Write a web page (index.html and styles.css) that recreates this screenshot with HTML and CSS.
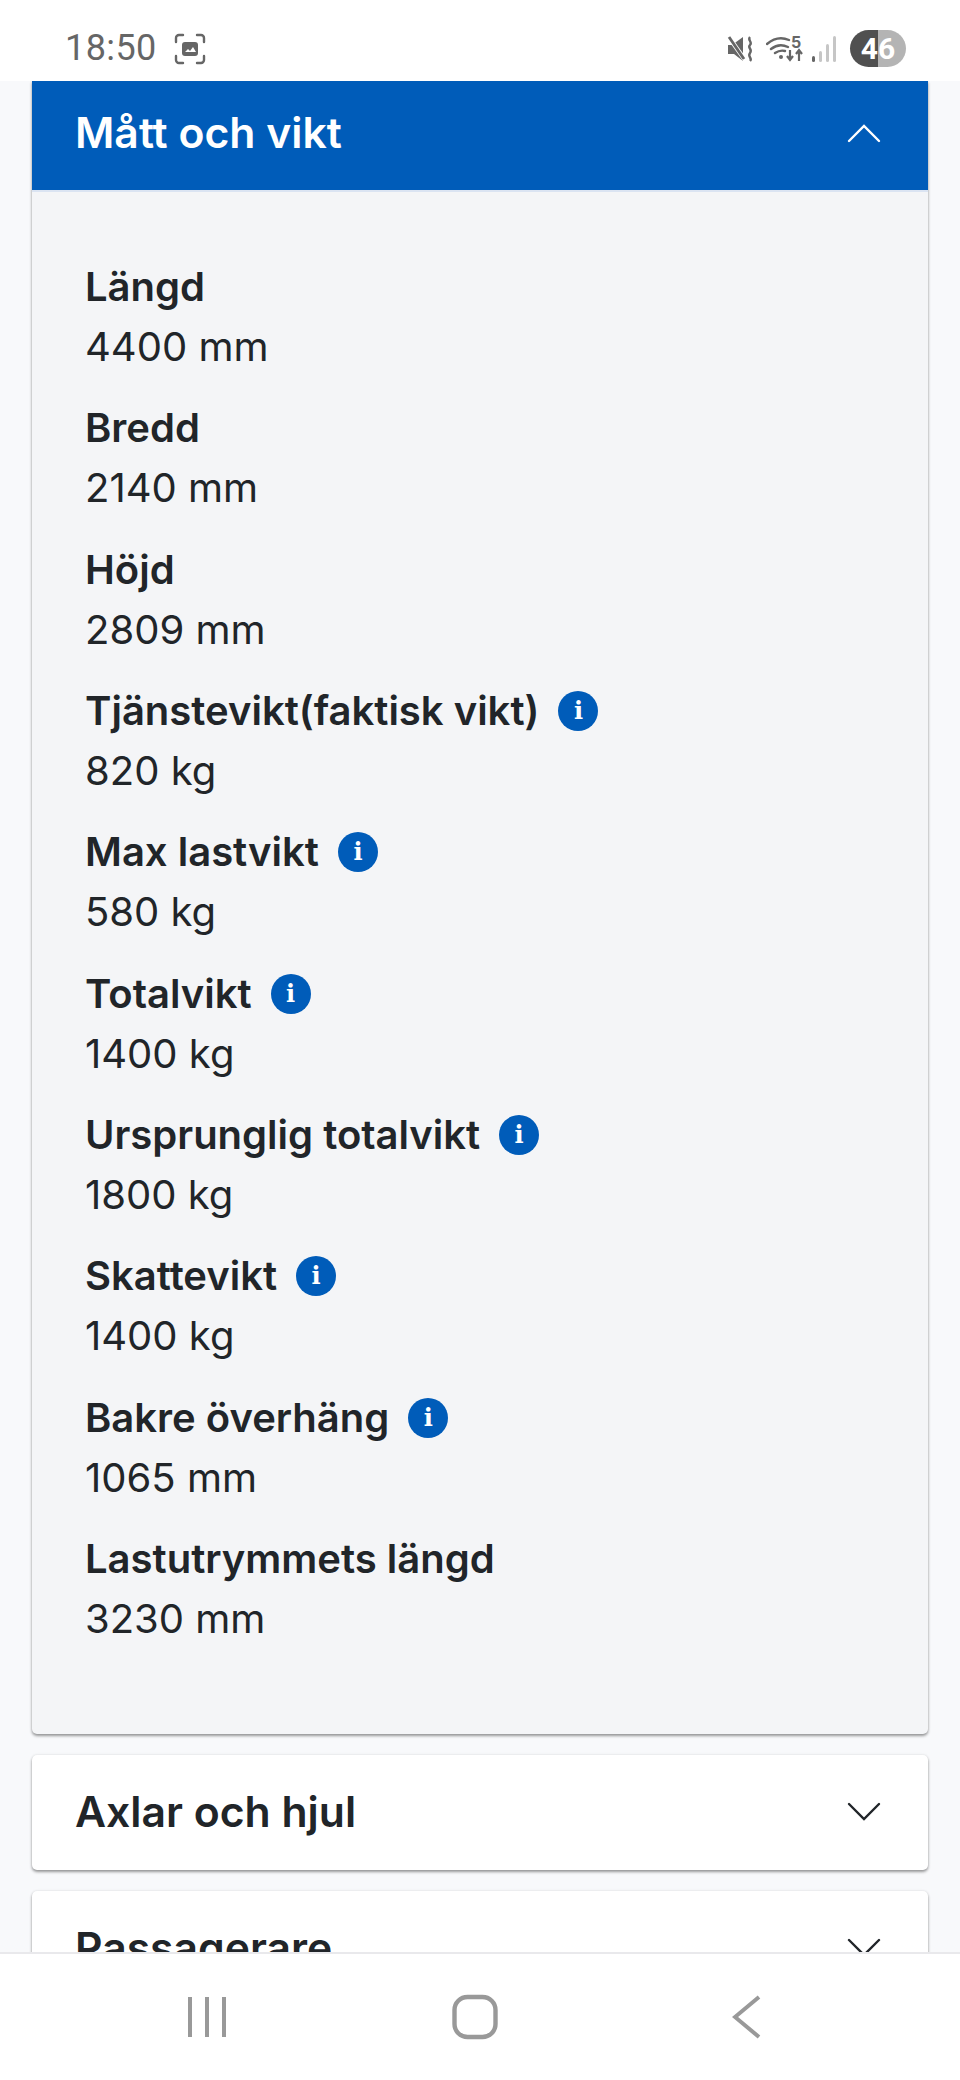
FILE: index.html
```html
<!DOCTYPE html>
<html lang="sv">
<head>
<meta charset="utf-8">
<title>Mått och vikt</title>
<link rel="stylesheet" href="styles.css">
</head>
<body>
<div class="phone">
  <header class="status">
    <div class="status-left">
      <span class="time">18:50</span>
      <svg class="shot" viewBox="0 0 32 32" fill="none"><path d="M2 9V5a3 3 0 0 1 3-3h4M23 2h4a3 3 0 0 1 3 3v4M30 23v4a3 3 0 0 1-3 3h-4M9 30H5a3 3 0 0 1-3-3v-4" stroke="#666" stroke-width="2.400" stroke-linecap="round"/><rect x="8" y="9" width="16" height="14" rx="3" fill="#666"/><path d="M11 19l3-3 2 2 3-4 3 5z" fill="#fff"/></svg>
    </div>
    <div class="status-right">
      <svg class="mute" viewBox="0 0 26 26"><path d="M1 9h4l11-8v24l-9-7H1z" fill="#666"/><path d="M1 0l17 24" stroke="#fff" stroke-width="4.500"/><path d="M2 1l15 22" stroke="#666" stroke-width="2.800"/><path d="M23 1c-3 3 3 5 0 8s3 4 0 8 3 5 0 8" stroke="#666" stroke-width="2.400" fill="none"/></svg>
      <svg class="wifi" viewBox="0 0 38 26" fill="none"><path d="M1 8c7-6 15-7 22-4M5 13c5-4 11-5 17-2M9 17c3-2 6-3 10-2" stroke="#666" stroke-width="2.400" stroke-linecap="round"/><circle cx="15" cy="21" r="2" fill="#666"/><path d="M24 14v10M21 20l3 4 3-4M33 25V15M30 18l3-4 3 4" stroke="#666" stroke-width="2.200"/></svg>
      <span class="wifi-5">5</span>
      <svg class="signal" viewBox="0 0 26 26"><rect x="1" y="20" width="3" height="6" rx="1.500" fill="#666"/><rect x="8" y="15" width="3" height="11" rx="1.500" fill="#c6c6c6"/><rect x="15" y="8" width="3" height="18" rx="1.500" fill="#c6c6c6"/><rect x="22" y="0" width="3" height="26" rx="1.500" fill="#c6c6c6"/></svg>
      <div class="battery"><span class="battery-num">46</span></div>
    </div>
  </header>

  <main class="content">
    <section class="card open">
      <div class="card-head head-blue">
        <h2>Mått och vikt</h2>
        <svg class="chev" viewBox="0 0 34 20" fill="none"><path d="M2 18L17 3l15 15" stroke="#fff" stroke-width="2.400" stroke-linecap="round"/></svg>
      </div>
      <div class="card-body">
        <div class="row"><div class="label">Längd</div><div class="value">4400 mm</div></div>
        <div class="row"><div class="label">Bredd</div><div class="value">2140 mm</div></div>
        <div class="row"><div class="label">Höjd</div><div class="value">2809 mm</div></div>
        <div class="row"><div class="label">Tjänstevikt(faktisk vikt)<span class="info">i</span></div><div class="value">820 kg</div></div>
        <div class="row"><div class="label">Max lastvikt<span class="info">i</span></div><div class="value">580 kg</div></div>
        <div class="row"><div class="label">Totalvikt<span class="info">i</span></div><div class="value">1400 kg</div></div>
        <div class="row"><div class="label">Ursprunglig totalvikt<span class="info">i</span></div><div class="value">1800 kg</div></div>
        <div class="row"><div class="label">Skattevikt<span class="info">i</span></div><div class="value">1400 kg</div></div>
        <div class="row"><div class="label">Bakre överhäng<span class="info">i</span></div><div class="value">1065 mm</div></div>
        <div class="row"><div class="label">Lastutrymmets längd</div><div class="value">3230 mm</div></div>
      </div>
    </section>
    <section class="card">
      <div class="card-head">
        <h2>Axlar och hjul</h2>
        <svg class="chev" viewBox="0 0 34 20" fill="none"><path d="M2 2l15 15L32 2" stroke="#212529" stroke-width="2.400" stroke-linecap="round"/></svg>
      </div>
    </section>
    <section class="card">
      <div class="card-head">
        <h2>Passagerare</h2>
        <svg class="chev" viewBox="0 0 34 20" fill="none"><path d="M2 2l15 15L32 2" stroke="#212529" stroke-width="2.400" stroke-linecap="round"/></svg>
      </div>
    </section>
  </main>

  <nav class="navbar">
    <svg class="nav-recent" viewBox="0 0 42 42" fill="none"><path d="M3 1v40M20 1v40M37 1v40" stroke="#999" stroke-width="4"/></svg>
    <svg class="nav-home" viewBox="0 0 46 46" fill="none"><rect x="2.500" y="3" width="41" height="40" rx="13" stroke="#999" stroke-width="4.400"/></svg>
    <svg class="nav-back" viewBox="0 0 30 44" fill="none"><path d="M27 2L3 22l24 20" stroke="#999" stroke-width="4"/></svg>
  </nav>
</div>
</body>
</html>
```

FILE: styles.css
```css
* { box-sizing: border-box; }
html, body { margin: 0; padding: 0; }
body { font-family: Inter, "Noto Sans", sans-serif; background: #fff; color: #212529; }

.phone { width: 960px; height: 2080px; display: flex; flex-direction: column; overflow: hidden; }

.status { height: 81px; flex: none; background: #fff; display: flex; justify-content: space-between; align-items: flex-start; padding: 30px 54px 0 65px; }
.status-left { display: flex; align-items: center; gap: 17px; height: 37px; }
.time { font-family: Roboto, Inter, sans-serif; font-size: 36px; line-height: 37px; font-weight: 400; color: #666; letter-spacing: .4px; }
.shot { width: 32px; height: 32px; }
.status-right { display: flex; align-items: flex-start; position: relative; }
.mute { width: 28px; height: 26px; margin-right: 12px; margin-top: 6px; }
.wifi { width: 38px; height: 26px; margin-top: 6px; }
.wifi-5 { position: absolute; left: 65px; top: 5px; font-size: 16px; line-height: 14px; font-weight: 700; color: #666; }
.signal { width: 26px; height: 26px; margin-left: 7px; margin-top: 6px; }
.battery { width: 56px; height: 37px; margin-left: 13px; border-radius: 19px; background: linear-gradient(90deg, #505050 0 50%, #b4b4b4 50% 100%); display: flex; align-items: center; justify-content: center; }
.battery-num { color: #fff; font-size: 30px; line-height: 37px; font-weight: 700; font-family: Roboto, sans-serif; }

.content { flex: 1; min-height: 0; overflow: hidden; background: #f8f9fb; padding: 0 32px; display: flex; flex-direction: column; gap: 21px; }

.card { flex: none; background: #fff; border-radius: 5px; box-shadow: 0 2px 3px rgba(0,0,0,.38), 0 0 3px rgba(0,0,0,.1); }
.card.open { background: #f4f5f7; border-radius: 0 0 5px 5px; }
.card-head { height: 115px; display: flex; align-items: center; justify-content: space-between; padding: 0 47px 0 43px; }
.card-head h2 { margin: 0; font-size: 42.700px; line-height: 54px; font-weight: 600; color: #212529; }
.head-blue { height: 109px; background: #005cb9; box-shadow: 0 2px 0 #dbe4f2; padding-bottom: 5px; }
.head-blue h2 { color: #fff; }
.chev { width: 34px; height: 20px; }

.card-body { padding: 67px 54px 85px 53px; display: flex; flex-direction: column; gap: 21.330px; }
.row { height: 120px; }
.label { font-size: 40px; line-height: 60px; font-weight: 600; color: #212529; display: flex; align-items: center; }
.value { font-size: 40px; line-height: 60px; font-weight: 400; color: #212529; }
.info { width: 40px; height: 40px; margin-left: 19px; border-radius: 50%; background: #005cb9; color: #fff; font-family: "DejaVu Serif", serif; font-size: 24px; line-height: 40px; font-weight: 700; text-align: center; flex: none; }

.navbar { height: 128px; flex: none; background: #fff; border-top: 2px solid #e9e9ec; display: flex; align-items: center; position: relative; padding: 0 0 0 187px; }
.nav-recent { width: 42px; height: 42px; }
.nav-home { width: 46px; height: 46px; margin-left: 223px; }
.nav-back { width: 30px; height: 44px; margin-left: 234px; }
```
